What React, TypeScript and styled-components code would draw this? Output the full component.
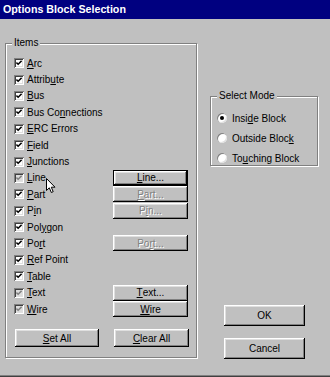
import styled, { createGlobalStyle } from 'styled-components';

interface ButtonSpec {
    label: string;
    key: number;
    disabled?: boolean;
    focused?: boolean;
}

interface ItemSpec {
    label: string;
    key: number;
    disabled?: boolean;
    button?: ButtonSpec;
}

const items: ItemSpec[] = [
    { label: 'Arc', key: 0 },
    { label: 'Attribute', key: 6 },
    { label: 'Bus', key: 0 },
    { label: 'Bus Connections', key: 6 },
    { label: 'ERC Errors', key: 0 },
    { label: 'Field', key: 0 },
    { label: 'Junctions', key: 0 },
    { label: 'Line', key: 0, disabled: true, button: { label: 'Line...', key: 0, focused: true } },
    { label: 'Part', key: 0, button: { label: 'Part...', key: 0, disabled: true } },
    { label: 'Pin', key: 1, button: { label: 'Pin...', key: 1, disabled: true } },
    { label: 'Polygon', key: 3 },
    { label: 'Port', key: 2, button: { label: 'Port...', key: 2, disabled: true } },
    { label: 'Ref Point', key: 0 },
    { label: 'Table', key: 0 },
    { label: 'Text', key: 0, disabled: true, button: { label: 'Text...', key: 0 } },
    { label: 'Wire', key: 0, disabled: true, button: { label: 'Wire', key: 0 } },
];

const modes = [
    { label: 'Inside Block', key: 4, selected: true },
    { label: 'Outside Block', key: 12, selected: false },
    { label: 'Touching Block', key: 2, selected: false },
];

const withKey = (text: string, idx: number) => (
    <>
        {text.slice(0, idx)}
        <Key>{text[idx]}</Key>
        {text.slice(idx + 1)}
    </>
);

const App = () => {
    return (
        <>
            <GlobalStyle />
            <Window>
                <TitleBar>Options Block Selection</TitleBar>
                <Body>
                    <ItemsGroup>
                        <Legend>Items</Legend>
                        <ItemGrid>
                            {items.map((item) => (
                                <ItemRow key={item.label}>
                                    <CheckLabel>
                                        <CheckBox $disabled={!!item.disabled}>
                                            <svg width="6" height="6" viewBox="0 0 7 7">
                                                <path
                                                    d="M0.5 3 L2.5 5 L6.5 1"
                                                    fill="none"
                                                    stroke={item.disabled ? '#808080' : '#000'}
                                                    strokeWidth="1.7"
                                                />
                                            </svg>
                                        </CheckBox>
                                        <span>{withKey(item.label, item.key)}</span>
                                    </CheckLabel>
                                    {item.button && (
                                        <RowButton
                                            $disabled={!!item.button.disabled}
                                            $focused={!!item.button.focused}
                                        >
                                            {withKey(item.button.label, item.button.key)}
                                        </RowButton>
                                    )}
                                </ItemRow>
                            ))}
                        </ItemGrid>
                        <GroupFooter>
                            <FooterButton $width={84}>{withKey('Set All', 0)}</FooterButton>
                            <FooterButton $width={75}>{withKey('Clear All', 0)}</FooterButton>
                        </GroupFooter>
                    </ItemsGroup>
                    <RightColumn>
                        <ModeGroup>
                            <Legend>Select Mode</Legend>
                            <RadioList>
                                {modes.map((mode) => (
                                    <RadioRow key={mode.label}>
                                        <Radio $selected={mode.selected} />
                                        <span>{withKey(mode.label, mode.key)}</span>
                                    </RadioRow>
                                ))}
                            </RadioList>
                        </ModeGroup>
                        <DialogButtons>
                            <DialogButton>OK</DialogButton>
                            <DialogButton>Cancel</DialogButton>
                        </DialogButtons>
                    </RightColumn>
                </Body>
                <Cursor width="10" height="16" viewBox="0 0 10 16">
                    <path
                        d="M0.5 0.5 L0.5 12.5 L3.3 9.8 L5.3 14.5 L7.2 13.7 L5.3 9.2 L9 9.2 Z"
                        fill="#fff"
                        stroke="#000"
                        strokeWidth="1"
                    />
                </Cursor>
            </Window>
        </>
    );
};

interface DisabledProps {
    $disabled: boolean;
}

interface RowButtonProps {
    $disabled: boolean;
    $focused: boolean;
}

interface WidthProps {
    $width: number;
}

interface RadioProps {
    $selected: boolean;
}

const GlobalStyle = createGlobalStyle`
    body {
        margin: 0;
        background: #c0c0c0;
        font-family: "Liberation Sans", Arial, sans-serif;
    }
`;

const Window = styled.div`
    position: relative;
    width: 330px;
    height: 377px;
    background: #c0c0c0;
    font-size: 10px;
    color: #000;
    box-shadow: inset 0 -1px #404040, inset 0 -2px #808080;
    overflow: hidden;
`;

const TitleBar = styled.div`
    height: 19px;
    background: #000080;
    color: #fff;
    font-weight: bold;
    font-size: 10.7px;
    line-height: 19px;
    padding-left: 3px;
`;

const Body = styled.div`
    display: flex;
    padding: 24px 0 0 5px;
`;

const Group = styled.div`
    border: 1px solid #808080;
    box-shadow: inset 1px 1px #fff, 1px 1px #fff;
`;

const Legend = styled.div`
    width: fit-content;
    margin: -7px 0 0 6px;
    padding: 0 2px;
    background: #c0c0c0;
    line-height: 12px;
`;

const ItemsGroup = styled(Group)`
    width: 192px;
    height: 315px;
    box-sizing: border-box;
    display: flex;
    flex-direction: column;
`;

const ItemGrid = styled.div`
    display: grid;
    grid-auto-rows: 16.4px;
    margin: 6px 0 0 8px;
`;

const ItemRow = styled.div`
    display: grid;
    grid-template-columns: 99px 75px;
    align-items: center;
`;

const CheckLabel = styled.div`
    display: flex;
    align-items: center;
    gap: 3px;
    white-space: nowrap;
`;

const CheckBox = styled.div<DisabledProps>`
    width: 10px;
    height: 10px;
    box-sizing: border-box;
    display: flex;
    align-items: center;
    justify-content: center;
    background: ${(props) => (props.$disabled ? '#dcdcdc' : '#fff')};
    box-shadow: inset 1px 1px #808080, inset -1px -1px #fff, inset 2px 2px #404040,
        inset -2px -2px #dfdfdf;
`;

const Key = styled.span`
    text-decoration: underline;
`;

const ButtonBase = styled.div`
    box-sizing: border-box;
    display: flex;
    align-items: center;
    justify-content: center;
    background: #c0c0c0;
    box-shadow: inset -1px -1px #000, inset 1px 1px #fff, inset -2px -2px #808080,
        inset 2px 2px #dfdfdf;
    white-space: nowrap;
`;

const RowButton = styled(ButtonBase)<RowButtonProps>`
    height: 16px;
    color: ${(props) => (props.$disabled ? '#808080' : '#000')};
    text-shadow: ${(props) => (props.$disabled ? '1px 1px #fff' : 'none')};
    border: ${(props) => (props.$focused ? '1px solid #000' : 'none')};
`;

const GroupFooter = styled.div`
    display: grid;
    grid-template-columns: 99px 75px;
    margin: 12px 0 0 9px;
`;

const FooterButton = styled(ButtonBase)<WidthProps>`
    width: ${(props) => props.$width}px;
    height: 18px;
`;

const RightColumn = styled.div`
    display: flex;
    flex-direction: column;
    margin: 53px 0 0 13px;
`;

const ModeGroup = styled(Group)`
    width: 108px;
    height: 70px;
    box-sizing: border-box;
`;

const RadioList = styled.div`
    display: flex;
    flex-direction: column;
    margin-top: 6px;
`;

const RadioRow = styled.div`
    display: flex;
    align-items: center;
    gap: 5px;
    height: 20px;
    padding-left: 6px;
    white-space: nowrap;
`;

const Radio = styled.div<RadioProps>`
    width: 10px;
    height: 10px;
    border-radius: 50%;
    background: #fff;
    box-shadow: inset 1px 1px #808080, inset -1px -1px #dfdfdf;
    display: flex;
    align-items: center;
    justify-content: center;

    &::after {
        content: '';
        width: 4px;
        height: 4px;
        border-radius: 50%;
        background: ${(props) => (props.$selected ? '#000' : 'transparent')};
    }
`;

const DialogButtons = styled.div`
    display: flex;
    flex-direction: column;
    gap: 12px;
    margin: 139px 0 0 14px;
`;

const DialogButton = styled(ButtonBase)`
    width: 81px;
    height: 21px;
`;

const Cursor = styled.svg`
    position: absolute;
    left: 46px;
    top: 178px;
`;

export default App;
